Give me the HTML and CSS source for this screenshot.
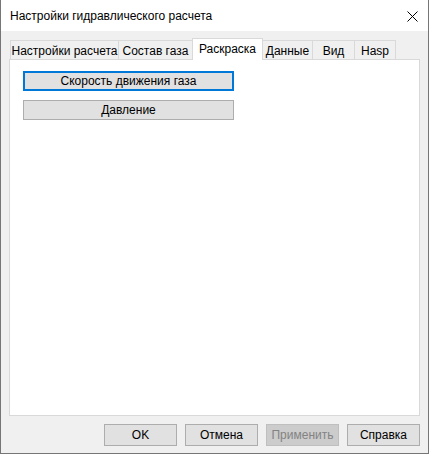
FILE: index.html
```html
<!DOCTYPE html>
<html>
	<head>
		<title>Настройки гидравлического расчета</title>
		<link rel="stylesheet" href="styles.css">
	</head>
	<body>
		<div class="window">
			<div class="titlebar">
				<span class="caption">Настройки гидравлического расчета</span>
				<svg class="close" viewBox="0 0 11 11">
					<line x1="0.5" y1="0.5" x2="10.5" y2="10.5" />
					<line x1="10.5" y1="0.5" x2="0.5" y2="10.5" />
				</svg>
			</div>
			<div class="client">
				<div class="tabs">
					<div class="tab">Настройки расчета</div>
					<div class="tab">Состав газа</div>
					<div class="tab selected">Раскраска</div>
					<div class="tab">Данные</div>
					<div class="tab">Вид</div>
					<div class="tab">Hasp</div>
				</div>
				<div class="panel">
					<div class="button wide focused">Скорость движения газа</div>
					<div class="button wide">Давление</div>
				</div>
				<div class="footer">
					<div class="button">OK</div>
					<div class="button">Отмена</div>
					<div class="button disabled">Применить</div>
					<div class="button">Справка</div>
				</div>
			</div>
		</div>
	</body>
</html>
```

FILE: styles.css
```css
body {
	margin: 0;
	font-family: "Liberation Sans", Arial, sans-serif;
	font-size: 12px;
	color: #000;
}

.window {
	width: 429px;
	height: 454px;
	box-sizing: border-box;
	border: 1px solid #767676;
	border-top: none;
	display: flex;
	flex-direction: column;
	background-color: #f0f0f0;
}

.titlebar {
	height: 31px;
	flex: none;
	background-color: #fff;
	display: flex;
	align-items: center;
	justify-content: space-between;
	padding: 0 9px 0 9px;
}

.titlebar .caption {
	font-size: 12px;
	margin-top: 1px;
}

.titlebar .close {
	width: 11px;
	height: 11px;
	margin-top: 2px;
	margin-right: 1px;
}

.titlebar .close line {
	stroke: #000;
	stroke-width: 1;
}

.client {
	flex: 1;
	display: flex;
	flex-direction: column;
	padding: 7px 8px 0 8px;
}

.tabs {
	height: 21px;
	display: flex;
	align-items: flex-end;
	padding-left: 1px;
}

.tab {
	height: 19px;
	box-sizing: border-box;
	border: 1px solid #d9d9d9;
	border-bottom: none;
	background-color: #f0f0f0;
	display: flex;
	align-items: center;
	justify-content: center;
	padding-top: 2px;
	margin-left: -1px;
	white-space: nowrap;
}

.tab:first-child {
	margin-left: 0;
}

.tab:nth-child(1) { width: 109px; }
.tab:nth-child(2) { width: 75px; }
.tab:nth-child(3) { width: 71px; }
.tab:nth-child(4) { width: 51px; }
.tab:nth-child(5) { width: 43px; }
.tab:nth-child(6) { width: 42px; }

.tab.selected {
	height: 22px;
	margin-bottom: -1px;
	background-color: #fff;
	position: relative;
	z-index: 1;
	padding-top: 0;
	padding-bottom: 2px;
}

.panel {
	height: 357px;
	flex: none;
	box-sizing: border-box;
	border: 1px solid #d9d9d9;
	background-color: #fff;
	display: flex;
	flex-direction: column;
	gap: 9px;
	padding: 11px 0 0 13px;
}

.button {
	width: 73px;
	height: 22px;
	box-sizing: border-box;
	border: 1px solid #adadad;
	background-color: #e1e1e1;
	display: flex;
	align-items: center;
	justify-content: center;
	white-space: nowrap;
}

.button.wide {
	width: 211px;
	height: 20px;
}

.button.focused {
	border: 2px solid #0078d7;
}

.button.disabled {
	background-color: #cccccc;
	border-color: #bfbfbf;
	color: #838383;
}

.footer {
	display: flex;
	justify-content: flex-end;
	gap: 8px;
	padding-top: 8px;
}
```
